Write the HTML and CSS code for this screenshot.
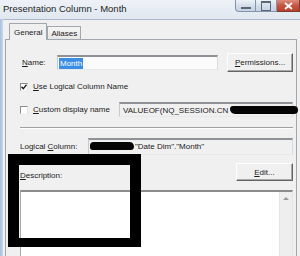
FILE: index.html
```html
<!DOCTYPE html>
<html lang="en">
<head>
    <meta charset="UTF-8">
    <title>Presentation Column - Month</title>
    <link rel="stylesheet" href="styles.css">
</head>
<body>
    <div class="window">
        <div class="titlebar">
            <span class="title">Presentation Column - Month</span>
            <div class="controls">
                <span class="ctl min"></span>
                <span class="ctl max"></span>
                <span class="ctl close">
                    <svg width="9" height="8" viewBox="0 0 9 8"><path d="M1 1 L8 7 M8 1 L1 7" stroke="#fff" stroke-width="1.8"/></svg>
                </span>
            </div>
        </div>

        <div class="client">
            <div class="tabs">
                <span class="tab active">General</span>
                <span class="tab">Aliases</span>
            </div>

            <div class="panel">
                <div class="row name-row">
                    <span class="label name-label"><u>N</u>ame:</span>
                    <div class="field name-field"><span class="selected">Month</span></div>
                    <button class="btn perm-btn"><u>P</u>ermissions...</button>
                </div>

                <div class="row check-row">
                    <span class="checkbox">
                        <svg width="6" height="6" viewBox="0 0 6 6"><path d="M0.5 2.8 L2.3 4.6 L5.5 0.8" fill="none" stroke="#222" stroke-width="1.4"/></svg>
                    </span>
                    <span class="label"><u>U</u>se Logical Column Name</span>
                </div>

                <div class="row check-row custom-row">
                    <span class="checkbox"></span>
                    <span class="label grow"><u>C</u>ustom display name</span>
                    <div class="field value-field">VALUEOF(NQ_SESSION.CN<span class="redact wide"></span></div>
                </div>

                <div class="separator"></div>

                <div class="row logical-row">
                    <span class="label logical-label">Logical <u>C</u>olumn:</span>
                    <div class="field logical-field"><span class="redact"></span>"Date Dim"."Month"</div>
                </div>

                <div class="row desc-row">
                    <span class="label"><u>D</u>escription:</span>
                    <button class="btn edit-btn"><u>E</u>dit...</button>
                </div>

                <div class="textarea">
                    <div class="scrollbar"><span class="arrow"></span></div>
                </div>
            </div>
        </div>

        <!-- marker box drawn over the dialog -->
        <div class="annotation"></div>
    </div>
</body>
</html>
```

FILE: styles.css
```css
/* General reset */
* {
    margin: 0;
    padding: 0;
    box-sizing: border-box;
}

body {
    width: 300px;
    height: 256px;
    overflow: hidden;
    font-family: "Liberation Sans", Arial, sans-serif;
    font-size: 8px;
    color: #1b1b1b;
    background: #c3d4e9;
}

.window {
    position: relative;
    width: 300px;
    height: 256px;
    display: flex;
    flex-direction: column;
    background: linear-gradient(90deg, #a7bedc, #c9d9ec 3px);
}

/* Title bar */
.titlebar {
    height: 19px;
    flex-shrink: 0;
    display: flex;
    justify-content: space-between;
    align-items: flex-start;
    background: linear-gradient(#eef2f7, #e0e7f0);
}

.title {
    padding: 3px 0 0 3px;
    font-size: 9.5px;
    line-height: 11px;
    color: #1e1e1e;
}

.controls {
    display: flex;
}

.ctl {
    width: 21px;
    height: 12px;
    display: flex;
    align-items: center;
    justify-content: center;
    border: 1px solid #8294ab;
    border-top: none;
    border-left: none;
    background: linear-gradient(#eef2f7, #d3dde9 55%, #c6d3e3);
}

.ctl.min {
    border-left: 1px solid #8294ab;
    border-bottom-left-radius: 4px;
}

.ctl.min::after {
    content: "";
    width: 10px;
    height: 2px;
    margin-top: 5px;
    background: #5a6777;
}

.ctl.max::after {
    content: "";
    width: 8px;
    height: 7px;
    border: 1px solid #5a6777;
    border-top-width: 2px;
}

.ctl.close {
    width: 23px;
    border-color: #7b3a30;
    background: linear-gradient(#dd8c7c, #c8553f 50%, #b9402b);
}

/* Client area */
.client {
    flex: 1;
    min-height: 0;
    margin-left: 3px;
    padding: 3px 0 0 2px;
    background: #f0f0f0;
    border-top: 1px solid #aab8c9;
    display: flex;
    flex-direction: column;
}

.tabs {
    display: flex;
    align-items: flex-end;
    height: 16px;
    flex-shrink: 0;
    padding-left: 4px;
}

.tab {
    height: 13px;
    padding: 1px 3px 0;
    line-height: 11px;
    border: 1px solid #a2a7af;
    border-bottom: none;
    background: linear-gradient(#f5f5f5, #e6e6e6);
}

.tab.active {
    position: relative;
    z-index: 1;
    height: 17px;
    margin-bottom: -1px;
    padding: 3px 4px 0;
    background: #f0f0f0;
}

.panel {
    flex: 1;
    min-height: 0;
    width: 292px;
    display: flex;
    flex-direction: column;
    padding: 13px 3px 0 14px;
    border: 1px solid #a2a7af;
    border-bottom: none;
    background: #f0f0f0;
}

/* Rows */
.row {
    display: flex;
    align-items: center;
    flex-shrink: 0;
}

.label {
    line-height: 10px;
    white-space: nowrap;
}

.grow {
    flex: 1;
}

.name-label {
    width: 37px;
    padding-left: 2px;
}

.field {
    height: 15px;
    padding: 0 3px;
    line-height: 13px;
    white-space: nowrap;
    border: 1px solid;
    border-color: #8e9196 #d7dadf #e6e8ec #c6c9ce;
    border-top-width: 2px;
    background: #f0f0f0;
}

.name-field {
    width: 161px;
    padding-left: 1px;
    background: #fbfbfb;
}

.selected {
    display: inline-block;
    padding: 0 1px;
    line-height: 11px;
    color: #fff;
    background: #3a8ee6;
}

.btn {
    font: inherit;
    color: #1b1b1b;
    background: #f0f0f0;
    border: 1px solid;
    border-color: #fdfdfd #646464 #646464 #fdfdfd;
    box-shadow: inset -1px -1px 0 #a8a8a8;
}

.perm-btn {
    width: 66px;
    height: 19px;
    margin-left: 9px;
}

.check-row {
    height: 12px;
    margin-top: 9px;
}

.checkbox {
    width: 8px;
    height: 8px;
    margin-right: 5px;
    display: flex;
    align-items: center;
    justify-content: center;
    border: 1px solid;
    border-color: #8b8b8b #e2e2e2 #f4f4f4 #8b8b8b;
    background: #fff;
}

.custom-row {
    height: 15px;
}

.value-field {
    width: 174px;
    overflow: visible;
}

.redact {
    display: inline-block;
    width: 44px;
    height: 8px;
    margin-right: 1px;
    vertical-align: -1px;
    border-radius: 4px 5px 4px 3px;
    background: #050505;
}

.redact.wide {
    width: 68px;
    margin: 0 0 0 2px;
    border-radius: 3px 4px 4px 5px;
}

.separator {
    height: 2px;
    flex-shrink: 0;
    margin-top: 10px;
    border-top: 1px solid #a0a0a0;
    border-bottom: 1px solid #fdfdfd;
}

.logical-row {
    margin-top: 9px;
}

.logical-label {
    width: 68px;
}

.logical-field {
    width: 205px;
    height: 17px;
    padding-left: 1px;
    line-height: 14px;
}

.desc-row {
    margin-top: 8px;
    justify-content: space-between;
    align-items: flex-end;
}

.edit-btn {
    width: 57px;
    height: 18px;
}

.textarea {
    flex: 1;
    margin-top: 9px;
    display: flex;
    justify-content: flex-end;
    border: 1px solid;
    border-color: #8b8b8b #e6e6e6 #e6e6e6 #a8a8a8;
    border-top-width: 2px;
    border-bottom: none;
    background: #fff;
}

.scrollbar {
    width: 13px;
    display: flex;
    justify-content: center;
    padding-top: 5px;
    border-left: 1px solid #e4e4e4;
    background: #eeeeee;
}

.arrow {
    width: 0;
    height: 0;
    border-left: 3px solid transparent;
    border-right: 3px solid transparent;
    border-bottom: 3px solid #9a9a9a;
}

/* thick black marker round the description label */
.annotation {
    position: absolute;
    left: 8px;
    top: 154px;
    width: 133px;
    height: 93px;
    border: 11px solid #000;
    border-bottom-width: 9px;
}
```
